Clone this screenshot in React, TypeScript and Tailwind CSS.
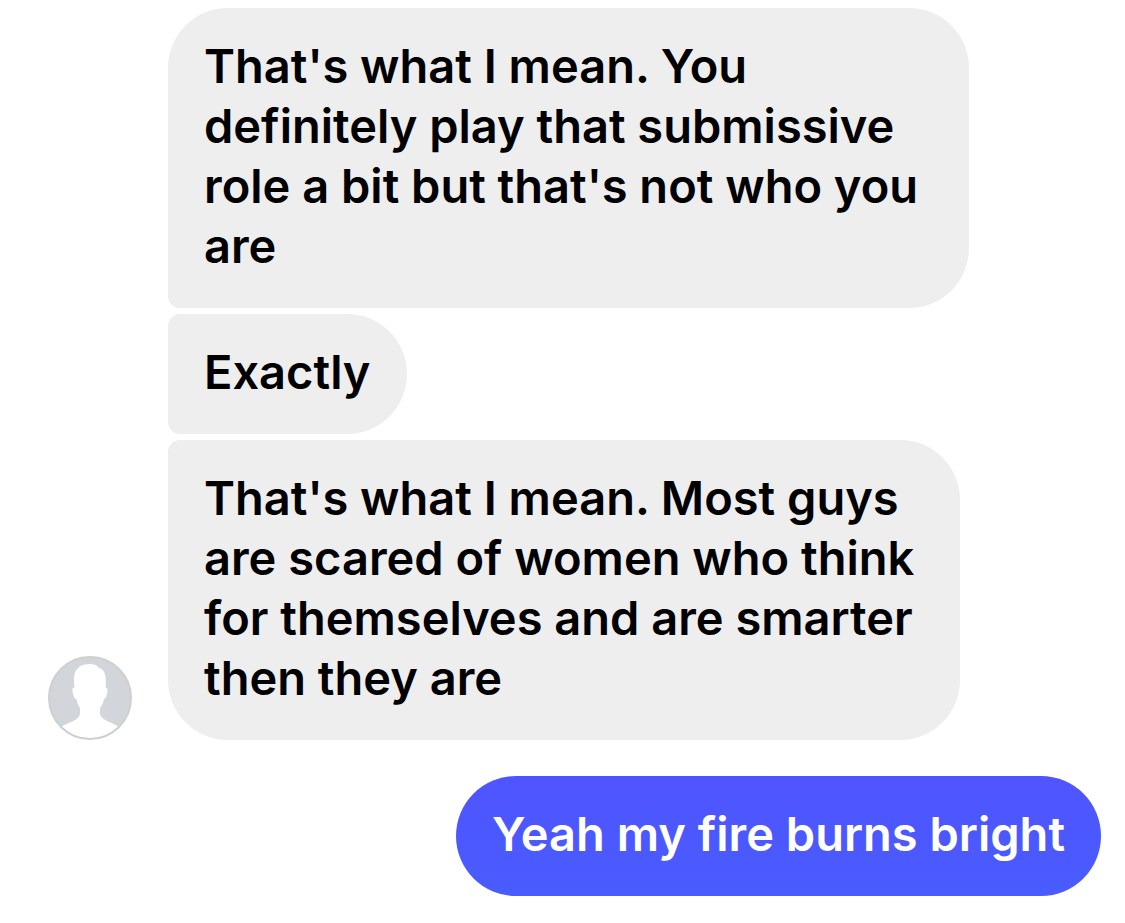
type Message = {
    id: number;
    text: string;
    shape: string;
};

const received: Message[] = [
    {
        id: 1,
        text: "That's what I mean. You definitely play that submissive role a bit but that's not who you are",
        shape: "max-w-[801px] rounded-[60px] rounded-bl-xl",
    },
    {
        id: 2,
        text: "Exactly",
        shape: "rounded-r-[60px] rounded-l-xl",
    },
    {
        id: 3,
        text: "That's what I mean. Most guys are scared of women who think for themselves and are smarter then they are",
        shape: "max-w-[792px] rounded-[60px] rounded-tl-xl",
    },
];

const Avatar = () => {
    return (
        <svg
            viewBox="0 0 84 84"
            className="size-[84px] shrink-0"
            role="img"
            aria-label="Profile photo"
        >
            <defs>
                <clipPath id="avatar-circle">
                    <circle cx="42" cy="42" r="41" />
                </clipPath>
            </defs>
            <circle cx="42" cy="42" r="41" fill="#d2d6db" />
            <path
                clipPath="url(#avatar-circle)"
                fill="#fff"
                d="M42 8C31 8 26 14 26 23c0 3 0 6 .5 8.500-2.200 0-2.500 2-1.700 5 .7 3 1.500 6.500 3.800 6.700C29.300 47 30.500 50 32 52v5c0 3-1.500 5-4 6.500-5 3-9.500 4-15 7.500V84h58V71c-5-3.500-10-4.500-14.500-7.500-2.500-1.500-4.500-3.500-4.500-6.500v-5c2-2.500 3.300-5 4-9 2-.5 2.700-3.500 3.200-6.500.6-3 .3-5-1.700-5 .4-3 .5-5 .3-8.500-.3-5-2-9-5-10.500-1-.4-1.500 0-2-.5C49 9 46 8 42 8Z"
            />
            <circle
                cx="42"
                cy="42"
                r="41"
                fill="none"
                stroke="#cfcfd0"
                strokeWidth="2"
            />
        </svg>
    );
};

const App = () => {
    return (
        <main className="flex flex-col gap-9 bg-white pt-2 pr-6 pb-7 pl-12 font-['Inter',sans-serif] text-[47px] leading-[60px] font-semibold text-black">
            <section className="flex items-end gap-9">
                <Avatar />
                <div className="flex min-w-0 flex-col items-start gap-1.5">
                    {received.map((message) => (
                        <p
                            key={message.id}
                            className={`bg-[#eeeeee] px-9 pt-7 pb-8 ${message.shape}`}
                        >
                            {message.text}
                        </p>
                    ))}
                </div>
            </section>
            <p className="self-end rounded-[60px] bg-linear-to-b from-[#4f54ff] to-[#485cff] px-9 pt-7 pb-8 text-white">
                Yeah my fire burns bright
            </p>
        </main>
    );
};

export default App;
